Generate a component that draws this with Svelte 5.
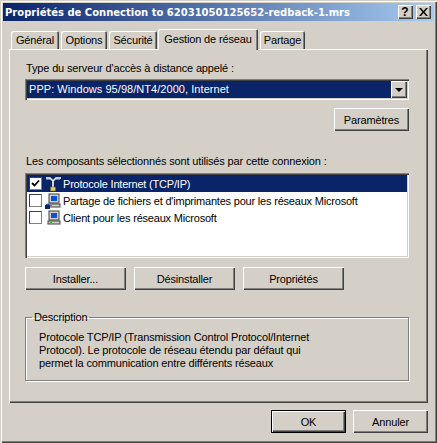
<script>
  const tabs = [
    { label: "Général", width: 48 },
    { label: "Options", width: 46 },
    { label: "Sécurité", width: 48 },
    { label: "Gestion de réseau", width: 100, active: true },
    { label: "Partage", width: 45 },
  ];

  const components = [
    { label: "Protocole Internet (TCP/IP)", icon: "proto", checked: true, selected: true },
    { label: "Partage de fichiers et d'imprimantes pour les réseaux Microsoft", icon: "share" },
    { label: "Client pour les réseaux Microsoft", icon: "client" },
  ];
</script>

<div class="window">
  <div class="titlebar">
    <span class="title">Propriétés de Connection to 62031050125652-redback-1.mrs</span>
    <div class="title-buttons">
      <button class="caption-btn help" type="button">?</button>
      <button class="caption-btn" type="button" aria-label="Fermer">
        <svg width="9" height="8" viewBox="0 0 9 8"><path d="M0 0h2l2.500 3L7 0h2L5.500 4 9 8H7L4.500 5 2 8H0l3.500-4z" fill="#000" /></svg>
      </button>
    </div>
  </div>

  <div class="content">
    <div class="tabs">
      {#each tabs as tab}
        <div class="tab" class:active={tab.active} style="width: {tab.width}px">{tab.label}</div>
      {/each}
    </div>

    <div class="panel">
      <div class="label first">Type du serveur d'accès à distance appelé :</div>
      <div class="combo">
        <div class="combo-value">PPP: Windows 95/98/NT4/2000, Internet</div>
        <div class="combo-arrow"><span class="arrow"></span></div>
      </div>
      <div class="params-row">
        <button class="btn params" type="button">Paramètres</button>
      </div>

      <div class="label second">Les composants sélectionnés sont utilisés par cette connexion :</div>
      <div class="list">
        {#each components as item}
          <div class="row" class:selected={item.selected}>
            <span class="check">
              {#if item.checked}
                <svg width="9" height="9" viewBox="0 0 9 9"><path d="M1 4l2.500 2.500L8 1.500" fill="none" stroke="#000" stroke-width="1.800" /></svg>
              {/if}
            </span>
            <span class="icon">
              {#if item.icon === "proto"}
                <svg width="16" height="16" viewBox="0 0 16 16">
                  <path d="M1 2h4l3 3 3-3h5" fill="none" stroke="#fff" stroke-width="1.500" />
                  <path d="M1 3.500h4M11 3.500h4" stroke="#808080" />
                  <path d="M8 5v7" stroke="#d4d0c8" stroke-width="2" />
                  <rect x="5.500" y="11" width="5" height="4" fill="#e8d44a" stroke="#6b5a10" stroke-width="0.500" />
                </svg>
              {:else}
                <svg width="16" height="16" viewBox="0 0 16 16">
                  <rect x="4" y="1" width="10" height="9" fill="#d4d0c8" stroke="#404040" />
                  <rect x="6" y="3" width="6" height="5" fill="#0a50e0" />
                  <rect x="3" y="11" width="12" height="3" fill="#d4d0c8" stroke="#404040" />
                  <rect x="5" y="12" width="2" height="1" fill="#20c020" />
                  {#if item.icon === "share"}
                    <path d="M0 12h5v4H0z" fill="#0a246a" />
                    <path d="M1 11h3v1H1z" fill="#2050c0" />
                  {/if}
                </svg>
              {/if}
            </span>
            <span class="row-label">{item.label}</span>
          </div>
        {/each}
      </div>

      <div class="actions">
        <button class="btn action" type="button">Installer...</button>
        <button class="btn action" type="button">Désinstaller</button>
        <button class="btn action" type="button">Propriétés</button>
      </div>

      <fieldset class="group">
        <legend>Description</legend>
        <p>
          Protocole TCP/IP (Transmission Control Protocol/Internet<br />
          Protocol). Le protocole de réseau étendu par défaut qui<br />
          permet la communication entre différents réseaux
        </p>
      </fieldset>
    </div>

    <div class="footer">
      <button class="btn footer-btn default" type="button">OK</button>
      <button class="btn footer-btn" type="button">Annuler</button>
    </div>
  </div>
</div>

<style>
  :global(body) {
    margin: 0;
    background: #d4d0c8;
  }

  .window {
    box-sizing: border-box;
    width: 437px;
    height: 443px;
    padding: 3px 4px 0 3px;
    background: #d4d0c8;
    font-family: "Liberation Sans", Arial, sans-serif;
    font-size: 11px;
    letter-spacing: -0.15px;
    color: #000;
    box-shadow: inset 1px 1px 0 #d4d0c8, inset 2px 2px 0 #fff, inset -1px -1px 0 #404040, inset -2px -2px 0 #808080;
  }

  .titlebar {
    display: flex;
    align-items: center;
    justify-content: space-between;
    height: 18px;
    margin-right: -1px;
    padding: 0 3px 0 2px;
    background: linear-gradient(to right, #0a246a, #a6caf0);
  }

  .title {
    font-family: "DejaVu Sans", sans-serif;
    font-weight: bold;
    font-size: 10px;
    letter-spacing: 0;
    color: #fff;
    white-space: nowrap;
  }

  .title-buttons {
    display: flex;
    gap: 3px;
  }

  .caption-btn {
    display: flex;
    align-items: center;
    justify-content: center;
    width: 15px;
    height: 14px;
    padding: 0 1px 1px 0;
    border: 0;
    background: #d4d0c8;
    font-family: "Liberation Sans", sans-serif;
    font-weight: bold;
    font-size: 12px;
    box-shadow: inset 1px 1px 0 #fff, inset -1px -1px 0 #404040, inset -2px -2px 0 #808080;
  }

  .content {
    padding: 8px 5px 0 6px;
  }

  .tabs {
    display: flex;
    align-items: flex-end;
    height: 20px;
    padding-left: 2px;
    gap: 2px;
  }

  .tab {
    position: relative;
    box-sizing: border-box;
    height: 18px;
    line-height: 18px;
    text-align: center;
    border-radius: 2px 2px 0 0;
    box-shadow: inset 1px 1px 0 #fff, inset -1px 0 0 #404040, inset -2px 0 0 #808080;
  }

  .tab.active {
    z-index: 1;
    height: 21px;
    line-height: 20px;
    margin: 0 0 -1px -1px;
    background: #d4d0c8;
  }

  .panel {
    box-sizing: border-box;
    height: 354px;
    padding: 1px 19px 0 16px;
    box-shadow: inset 1px 1px 0 #fff, inset -1px -1px 0 #404040, inset -2px -2px 0 #808080;
  }

  .label {
    height: 13px;
    line-height: 13px;
    padding-left: 1px;
    white-space: nowrap;
  }

  .label.first {
    margin-top: 12px;
  }

  .label.second {
    margin-top: 24px;
  }

  .combo {
    box-sizing: border-box;
    display: flex;
    width: 384px;
    height: 21px;
    margin-top: 4px;
    padding: 2px;
    background: #fff;
    box-shadow: inset 1px 1px 0 #808080, inset 2px 2px 0 #404040, inset -1px -1px 0 #fff, inset -2px -2px 0 #d4d0c8;
  }

  .combo-value {
    flex: 1;
    padding: 0 2px;
    line-height: 17px;
    letter-spacing: 0.05px;
    color: #fff;
    background: #0a246a;
    border: 0;
  }

  .combo-arrow {
    display: flex;
    align-items: center;
    justify-content: center;
    width: 16px;
    background: #d4d0c8;
    box-shadow: inset 1px 1px 0 #fff, inset -1px -1px 0 #404040, inset -2px -2px 0 #808080;
  }

  .arrow {
    width: 0;
    height: 0;
    border-left: 4px solid transparent;
    border-right: 4px solid transparent;
    border-top: 4px solid #000;
  }

  .params-row {
    display: flex;
    justify-content: flex-end;
    margin-top: 8px;
  }

  .btn {
    box-sizing: border-box;
    padding: 0;
    border: 0;
    background: #d4d0c8;
    font-family: inherit;
    font-size: 11px;
    letter-spacing: -0.15px;
    color: #000;
    box-shadow: inset 1px 1px 0 #fff, inset -1px -1px 0 #404040, inset -2px -2px 0 #808080;
  }

  .params {
    width: 75px;
    height: 23px;
  }

  .list {
    box-sizing: border-box;
    width: 384px;
    height: 85px;
    margin-top: 5px;
    padding: 2px;
    background: #fff;
    box-shadow: inset 1px 1px 0 #808080, inset 2px 2px 0 #404040, inset -1px -1px 0 #fff, inset -2px -2px 0 #d4d0c8;
  }

  .row {
    display: flex;
    align-items: center;
    height: 17px;
    padding-left: 2px;
    letter-spacing: -0.2px;
    white-space: nowrap;
  }

  .row.selected {
    background: #0a246a;
    color: #fff;
  }

  .check {
    box-sizing: border-box;
    display: flex;
    align-items: center;
    justify-content: center;
    flex: none;
    width: 13px;
    height: 13px;
    background: #fff;
    border: 1px solid #404040;
    border-right-color: #808080;
    border-bottom-color: #808080;
  }

  .icon {
    display: flex;
    flex: none;
    width: 16px;
    height: 16px;
    margin: 0 2px 0 3px;
  }

  .actions {
    display: flex;
    gap: 8px;
    margin-top: 9px;
  }

  .action {
    width: 101px;
    height: 23px;
  }

  .group {
    box-sizing: border-box;
    width: 384px;
    height: 70px;
    margin: 21px 0 0;
    padding: 0 0 0 13px;
    border: 1px solid #808080;
    box-shadow: 1px 1px 0 #fff, inset 1px 1px 0 #fff;
  }

  legend {
    margin-left: -7px;
    padding: 0 2px;
    line-height: 13px;
  }

  .group p {
    margin: 7px 0 0;
    line-height: 13px;
    white-space: nowrap;
  }

  .footer {
    display: flex;
    justify-content: flex-end;
    gap: 7px;
    margin-top: 7px;
  }

  .footer-btn {
    width: 75px;
    height: 23px;
  }

  .footer-btn.default {
    outline: 1px solid #000;
    outline-offset: -1px;
    box-shadow: inset 2px 2px 0 #fff, inset -2px -2px 0 #404040, inset -3px -3px 0 #808080;
  }
</style>
